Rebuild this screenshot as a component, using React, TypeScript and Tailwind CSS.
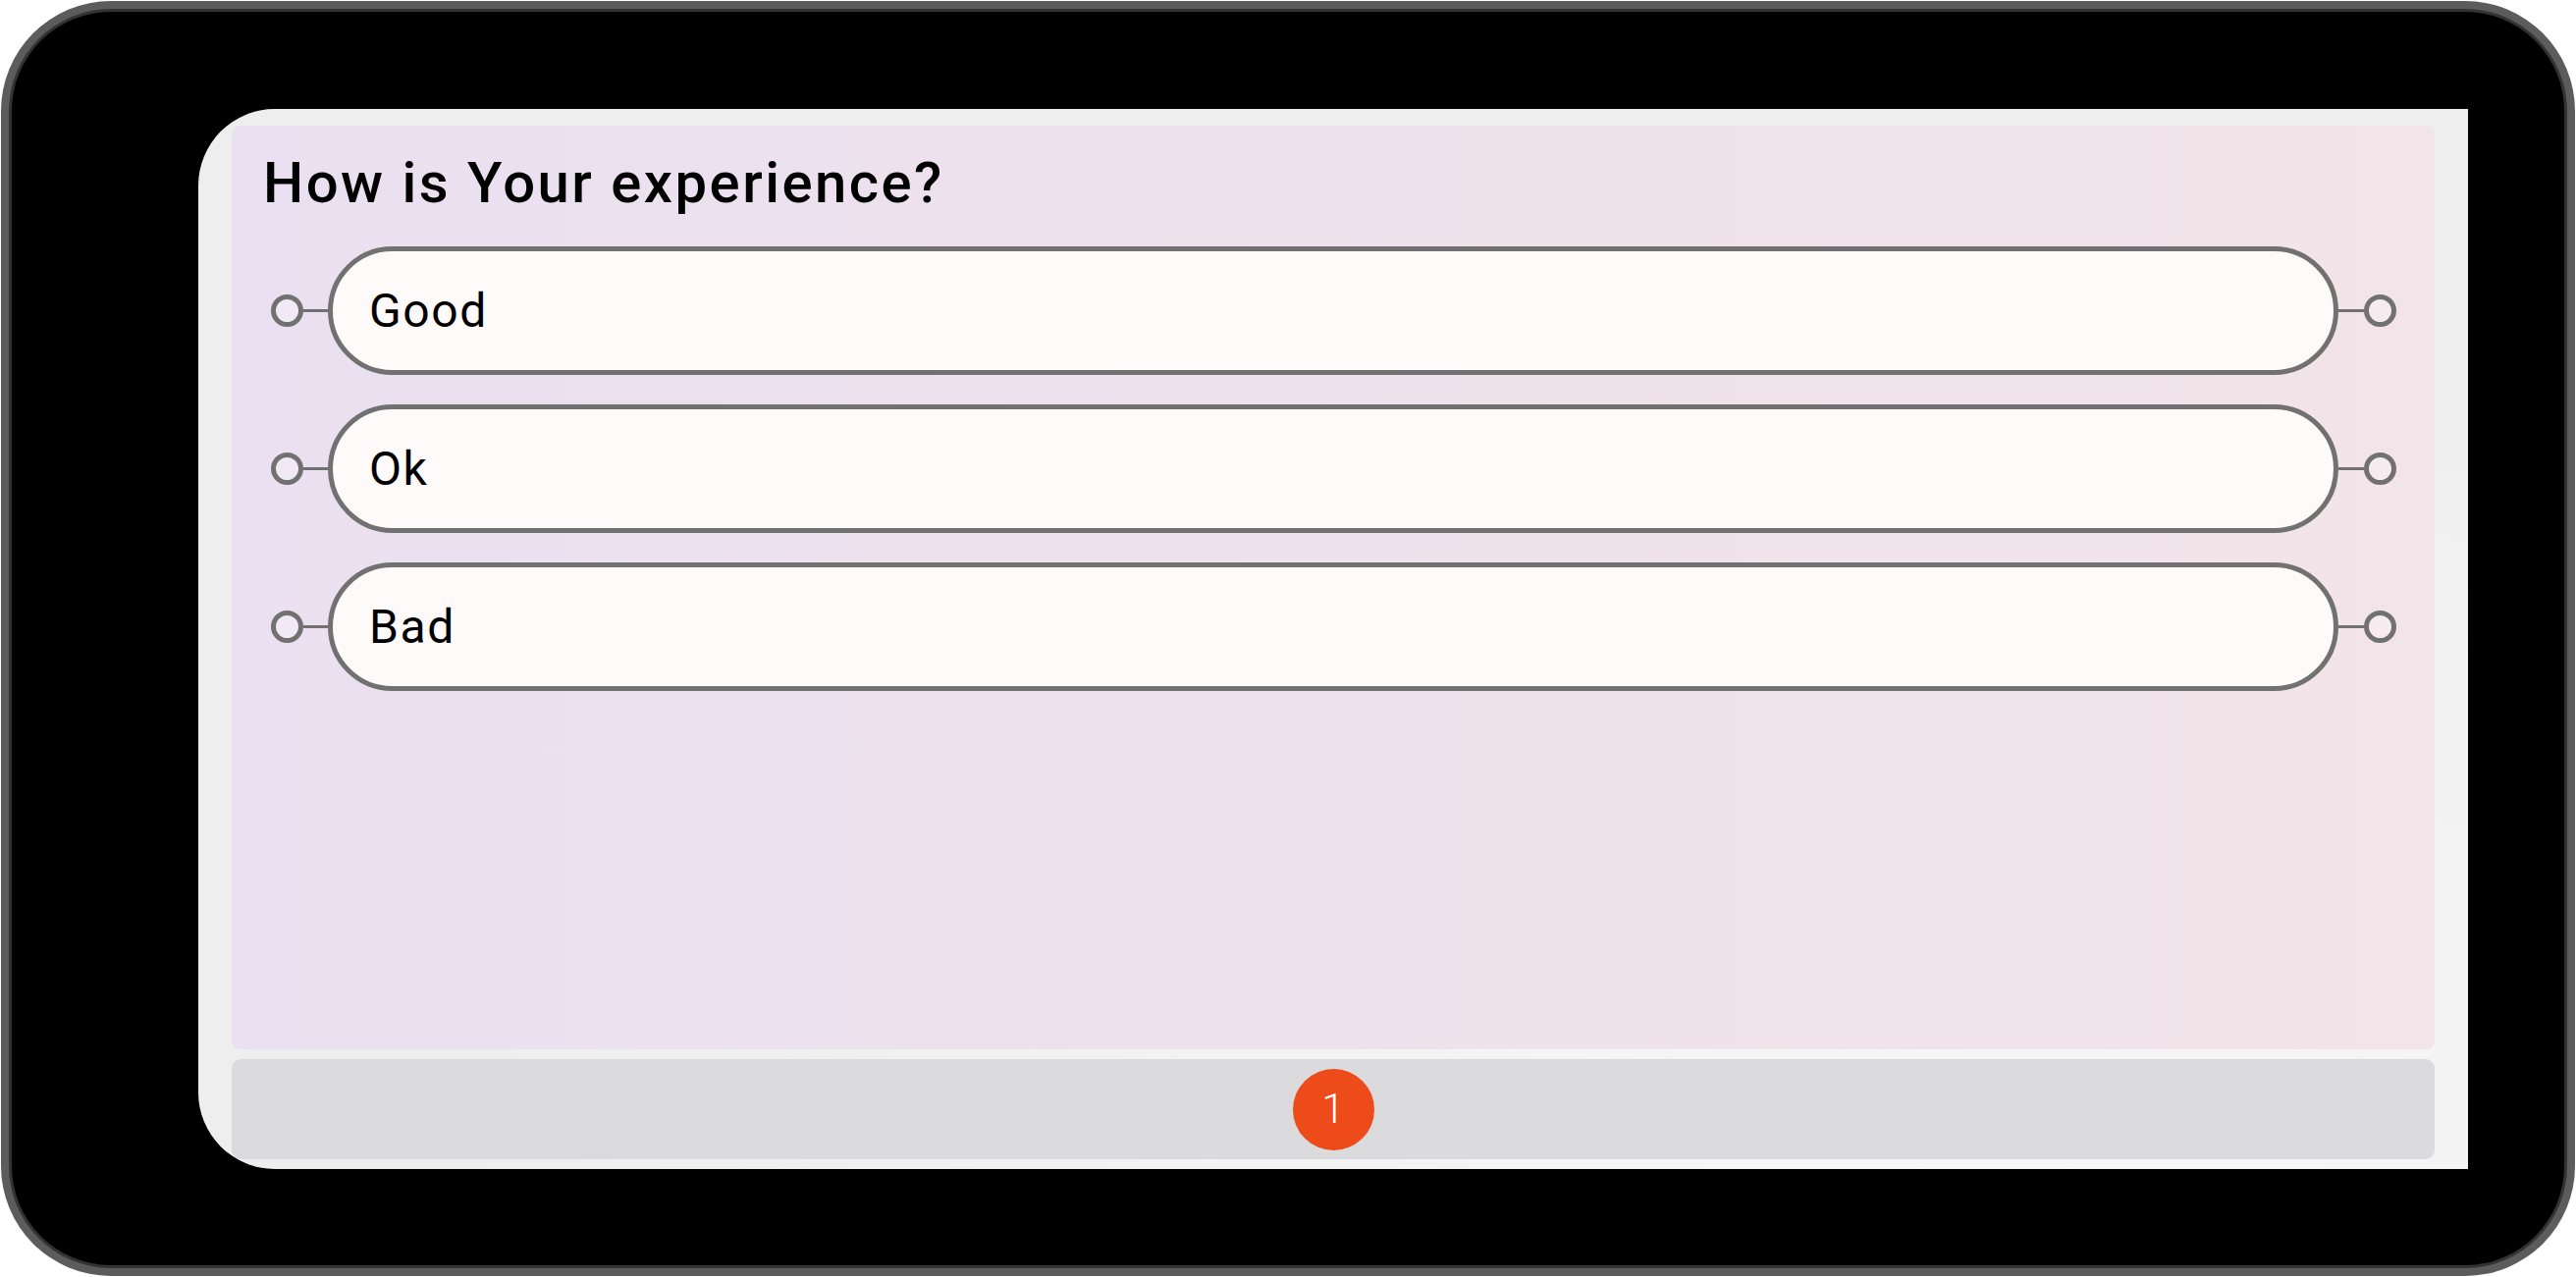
const options = ['Good', 'Ok', 'Bad'];

function Connector() {
  return <div className="h-[33px] w-[33px] shrink-0 rounded-full border-[5px] border-[#717171] bg-white/30" />;
}

function OptionRow({ label }: { label: string }) {
  return (
    <div className="flex items-center pl-[40px] pr-[39px]">
      <Connector />
      <div className="h-[3px] w-[25px] shrink-0 bg-[#717171]" />
      <div className="flex h-[131px] flex-1 items-center rounded-full border-[5px] border-[#717171] bg-[#fefafa] pl-[37px]">
        <span className="text-[48px] leading-none tracking-[1.6px] text-black">{label}</span>
      </div>
      <div className="h-[3px] w-[26px] shrink-0 bg-[#717171]" />
      <Connector />
    </div>
  );
}

export default function App() {
  return (
    <div className="h-[1301px] w-[2624px] bg-white p-[1px] font-['Roboto',sans-serif]">
      <div className="h-full w-full rounded-[112px] bg-[#5c5c5c] p-[8px]">
        <div className="h-full w-full rounded-[104px] bg-[#333333] p-[3px]">
          <div className="h-full w-full rounded-[101px] bg-black pl-[190px] pt-[99px]">
            <div className="flex h-[1080px] w-[2312px] flex-col gap-[10px] rounded-l-[78px] bg-[radial-gradient(ellipse_at_80%_100%,#f7f7f7,#eeeeee_60%)] px-[34px] pb-[10px] pt-[17px]">
              <div className="flex h-[941px] flex-col rounded-[9px] bg-gradient-to-r from-[#ebe0f1] via-[#eee2ec] to-[#f2e4e8] pt-[29px]">
                <h1 className="ml-[32px] text-[58px] font-medium leading-[58px] tracking-[2.5px] text-black">
                  How is Your experience?
                </h1>
                <div className="mt-[36px] flex flex-col gap-[30px]">
                  {options.map((option) => (
                    <OptionRow key={option} label={option} />
                  ))}
                </div>
              </div>
              <div className="flex flex-1 items-center justify-center rounded-[9px] bg-[#dbdbdd]">
                <div className="flex h-[83px] w-[83px] items-center justify-center rounded-full bg-[#ee4b1a] text-[42px] font-light leading-none text-white">
                  1
                </div>
              </div>
            </div>
          </div>
        </div>
      </div>
    </div>
  );
}
